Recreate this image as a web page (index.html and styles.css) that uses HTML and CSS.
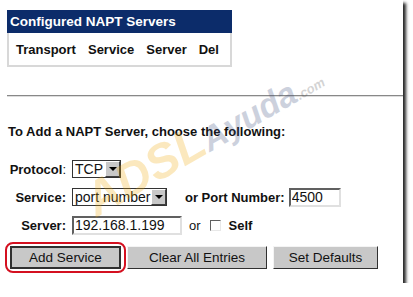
FILE: index.html
```html
<!DOCTYPE html>
<html lang="en">
<head>
  <meta charset="UTF-8">
  <title>NAPT Servers</title>
  <link rel="stylesheet" href="styles.css">
</head>
<body>
  <div class="frame">
    <div class="panel">
      <div class="panel-title">Configured NAPT Servers</div>
      <div class="panel-body">
        <span>Transport</span>
        <span>Service</span>
        <span>Server</span>
        <span>Del</span>
      </div>
    </div>

    <hr class="divider">

    <h3 class="form-title">To Add a NAPT Server, choose the following:</h3>

    <form class="napt-form">
      <div class="row">
        <label class="row-label"><b>Protocol</b>:</label>
        <div class="combo combo-small">
          <select><option>TCP</option><option>UDP</option></select>
          <span class="combo-arrow"></span>
        </div>
      </div>

      <div class="row">
        <label class="row-label"><b>Service:</b></label>
        <div class="combo combo-wide">
          <select><option>port number</option></select>
          <span class="combo-arrow"></span>
        </div>
        <b class="or-port">or Port Number:</b>
        <input type="text" class="field field-port" value="4500">
      </div>

      <div class="row">
        <label class="row-label"><b>Server:</b></label>
        <input type="text" class="field field-server" value="192.168.1.199">
        <span class="or">or</span>
        <input type="checkbox" class="check">
        <b class="self">Self</b>
      </div>

      <div class="buttons">
        <span class="highlight"><button type="button" class="btn btn-add">Add Service</button></span>
        <button type="button" class="btn btn-clear">Clear All Entries</button>
        <button type="button" class="btn btn-defaults">Set Defaults</button>
      </div>
    </form>

    <div class="watermark"><span class="wm-adsl">ADSL</span><span class="wm-ayuda">Ayuda</span><span class="wm-com">.com</span></div>
  </div>
</body>
</html>
```

FILE: styles.css
```css
* {
  margin: 0;
  padding: 0;
  box-sizing: border-box;
}

body {
  font-family: 'Liberation Sans', Arial, sans-serif;
  background-color: white;
  color: #111;
}

.frame {
  position: relative;
  width: 403px;
  height: 283px;
  background-color: white;
  box-shadow: 3px 3px 3px rgba(0,0,0,0.85);
  padding-top: 10px;
}

.panel {
  width: 225px;
  margin-left: 7px;
}

.panel-title {
  height: 23px;
  background-color: #0c2c6a;
  color: white;
  font-weight: bold;
  font-size: 13.5px;
  line-height: 23px;
  padding-left: 3px;
}

.panel-body {
  height: 34px;
  display: flex;
  gap: 12px;
  align-items: center;
  padding-left: 7px;
  border: 2px solid #d8d8d8;
  border-top: none;
  font-weight: bold;
  font-size: 13px;
}

.divider {
  margin: 28px 0 0 7px;
  border: none;
  border-top: 1px solid #888;
  border-bottom: 1px solid #ddd;
}

.form-title {
  font-size: 13px;
  font-weight: bold;
  margin: 27px 0 0 8px;
}

.napt-form {
  margin-top: 16px;
}

.row {
  display: flex;
  align-items: center;
  height: 28px;
  font-size: 13px;
}

.row-label {
  width: 66px;
  text-align: right;
  margin-right: 6px;
}

.combo {
  display: flex;
  height: 18px;
  border: 1px solid #333;
  background: white;
}

.combo select {
  appearance: none;
  -webkit-appearance: none;
  border: none;
  background: white;
  font-family: 'Liberation Sans', Arial, sans-serif;
  font-size: 14px;
  color: #111;
  padding-left: 2px;
  flex: 1;
  outline: none;
}

.combo-small {
  width: 49px;
}

.combo-wide {
  width: 95px;
}

.combo-arrow {
  width: 15px;
  background: #c8c8c8;
  border: 1px solid;
  border-color: #fff #404040 #404040 #fff;
  display: flex;
  align-items: center;
  justify-content: center;
}

.combo-arrow::after {
  content: '';
  border-left: 4px solid transparent;
  border-right: 4px solid transparent;
  border-top: 4px solid #000;
}

.or-port {
  margin-left: 18px;
}

.field {
  height: 19px;
  border: 2px solid;
  border-color: #606060 #e0e0e0 #e0e0e0 #606060;
  font-family: 'Liberation Sans', Arial, sans-serif;
  font-size: 14px;
  color: #111;
  padding-left: 1px;
  outline: none;
}

.field-port {
  width: 52px;
  margin-left: 4px;
}

.field-server {
  width: 110px;
}

.or {
  margin-left: 7px;
}

.check {
  appearance: none;
  -webkit-appearance: none;
  width: 11px;
  height: 11px;
  border: 1px solid;
  border-color: #606060 #e8e8e8 #e8e8e8 #606060;
  background: white;
  margin-left: 9px;
}

.self {
  margin-left: 8px;
}

.buttons {
  display: flex;
  align-items: center;
  margin: 3px 0 0 5px;
}

.highlight {
  display: flex;
  padding: 2px 3px;
  border: 2px solid #d41020;
  border-radius: 8px;
}

.btn {
  height: 23px;
  background-color: #c8c8c8;
  border: 1px solid;
  border-color: #f4f4f4 #303030 #303030 #f4f4f4;
  font-family: 'Liberation Sans', Arial, sans-serif;
  font-size: 13.5px;
  color: #111;
}

.btn-add {
  width: 111px;
  border: 2px solid #303030;
}

.btn-clear {
  width: 140px;
  margin-left: 1px;
}

.btn-defaults {
  width: 105px;
  margin-left: 6px;
}

.watermark {
  position: absolute;
  left: 102px;
  top: 172px;
  transform: rotate(-30deg);
  transform-origin: left bottom;
  font-weight: bold;
  font-style: italic;
  opacity: 0.25;
  pointer-events: none;
  white-space: nowrap;
}

.wm-adsl {
  font-size: 48px;
  color: #f0a800;
}

.wm-ayuda {
  font-size: 34px;
  color: #3a4a7a;
}

.wm-com {
  font-size: 13px;
  color: #555;
}
```
